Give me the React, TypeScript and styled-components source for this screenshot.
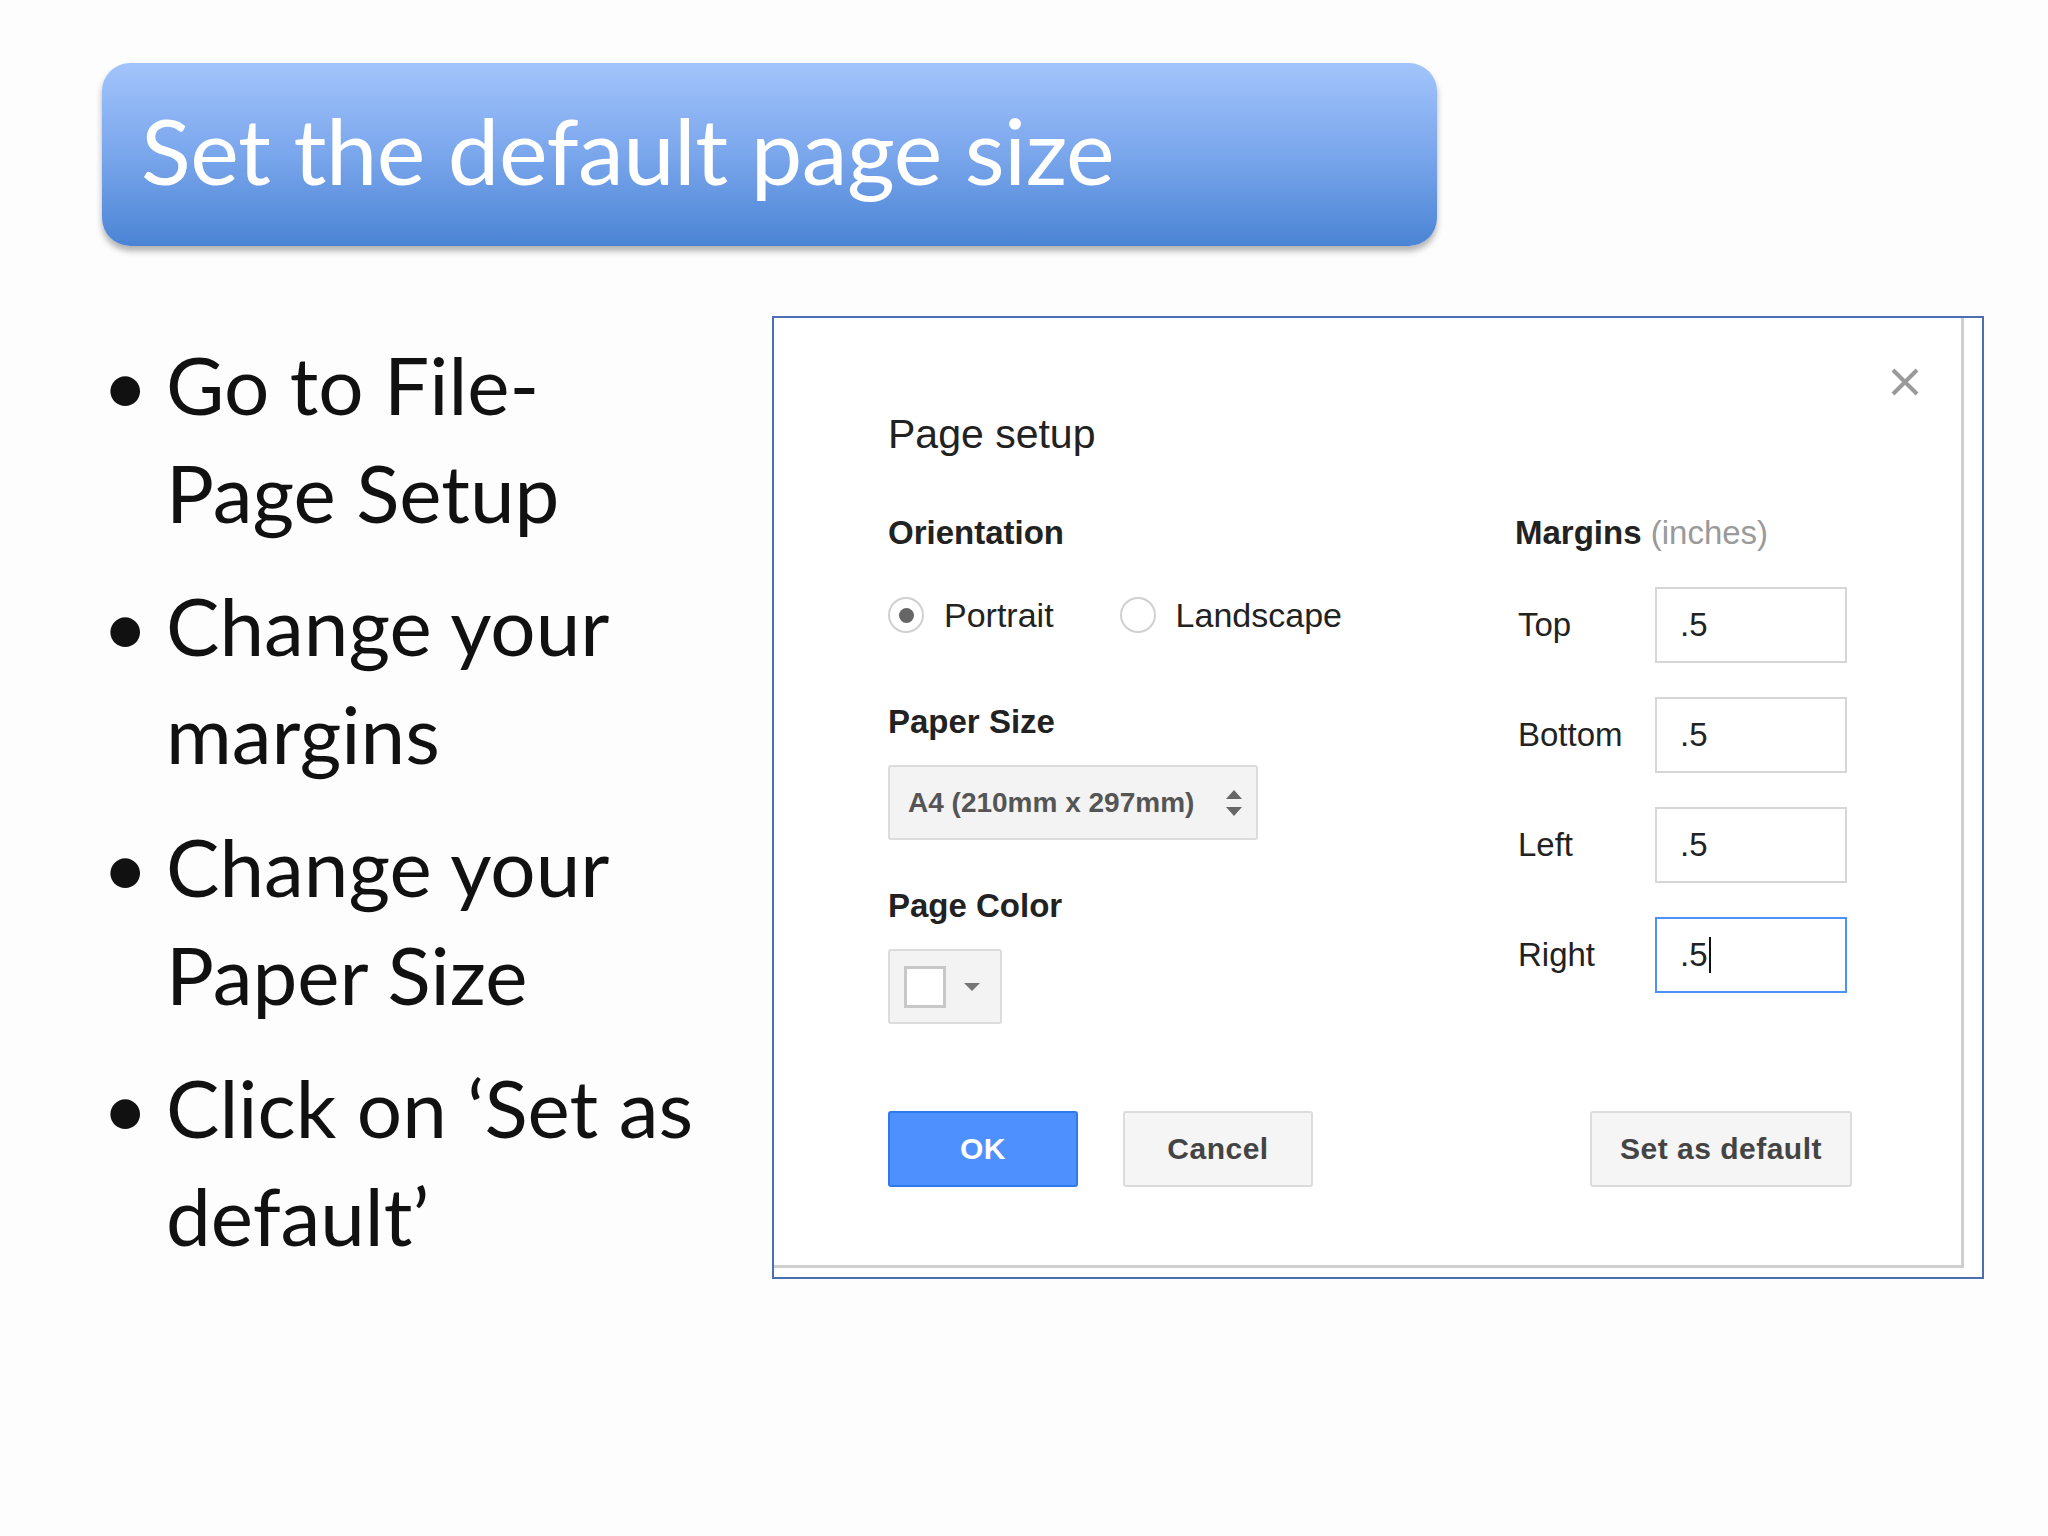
import styled, { createGlobalStyle } from 'styled-components';

const GlobalStyle = createGlobalStyle`
  body {
    margin: 0;
    background: #fdfdfd;
  }
`;

const Page = styled.div`
  width: 2048px;
  height: 1536px;
  padding: 63px 0 0 102px;
  box-sizing: border-box;
  font-family: Lato, 'Open Sans', sans-serif;
`;

const TitleBar = styled.div`
  width: 1335px;
  height: 183px;
  box-sizing: border-box;
  border-radius: 28px;
  background: linear-gradient(180deg, #a2c4fb 0%, #7aa6ec 50%, #4a84d4 100%);
  box-shadow: 0 5px 6px rgba(0, 0, 0, 0.3);
  display: flex;
  align-items: center;
  padding: 0 0 10px 39px;
  color: #fff;
  font-size: 92px;
  letter-spacing: -0.5px;
`;

const Content = styled.div`
  display: flex;
  align-items: flex-start;
  margin-top: 70px;
`;

const BulletList = styled.ul`
  list-style: none;
  margin: 0;
  padding: 14px 0 0;
  width: 670px;
  display: flex;
  flex-direction: column;
  gap: 25px;
`;

const Bullet = styled.li`
  position: relative;
  padding-left: 64px;
  font-size: 80px;
  line-height: 108px;
  color: #111;
  &::before {
    content: '•';
    position: absolute;
    left: 0;
    top: 0;
  }
`;

const Frame = styled.div`
  width: 1212px;
  height: 963px;
  box-sizing: border-box;
  border: 2px solid #4b6fb0;
  padding: 0 18px 9px 0;
  background: #fff;
  display: flex;
`;

const Dialog = styled.div`
  flex: 1;
  position: relative;
  border-right: 3px solid #cfcfcf;
  border-bottom: 3px solid #cfcfcf;
  padding: 91px 114px 0 114px;
  font-family: 'Liberation Sans', Arial, sans-serif;
  color: #222;
`;

const Close = styled.div`
  position: absolute;
  top: 48px;
  right: 40px;
  color: #9a9a9a;
`;

const DialogTitle = styled.div`
  font-size: 41px;
  line-height: 50px;
`;

const Columns = styled.div`
  display: flex;
  margin-top: 54px;
`;

const LeftCol = styled.div`
  width: 627px;
  display: flex;
  flex-direction: column;
`;

const RightCol = styled.div`
  flex: 1;
  display: flex;
  flex-direction: column;
`;

const Label = styled.div<{ $gap?: number }>`
  font-size: 33px;
  font-weight: bold;
  line-height: 40px;
  margin-top: ${(p) => p.$gap ?? 0}px;
  span {
    font-weight: normal;
    color: #9a9a9a;
  }
`;

const RadioRow = styled.div`
  display: flex;
  align-items: center;
  height: 40px;
  margin-top: 42px;
  font-size: 34px;
`;

const RadioItem = styled.label`
  display: flex;
  align-items: center;
  gap: 20px;
  margin-right: 66px;
`;

const Radio = styled.span<{ $checked?: boolean }>`
  width: 36px;
  height: 36px;
  box-sizing: border-box;
  border-radius: 50%;
  border: 2px solid #d0d0d0;
  background: #fff;
  display: flex;
  align-items: center;
  justify-content: center;
  &::after {
    content: '';
    width: 15px;
    height: 15px;
    border-radius: 50%;
    background: ${(p) => (p.$checked ? '#666' : 'transparent')};
  }
`;

const Select = styled.div`
  margin-top: 23px;
  width: 370px;
  height: 75px;
  box-sizing: border-box;
  border: 2px solid #dcdcdc;
  border-radius: 3px;
  background: #f3f3f3;
  display: flex;
  align-items: center;
  justify-content: space-between;
  padding: 0 12px 0 18px;
  font-size: 28px;
  font-weight: bold;
  color: #555;
`;

const ColorButton = styled.div`
  margin-top: 23px;
  width: 114px;
  height: 75px;
  box-sizing: border-box;
  border: 2px solid #dcdcdc;
  border-radius: 3px;
  background: #f3f3f3;
  display: flex;
  align-items: center;
  padding-left: 14px;
  gap: 18px;
`;

const Swatch = styled.div`
  width: 42px;
  height: 42px;
  box-sizing: border-box;
  border: 3px solid #c8c8c8;
  background: #fff;
`;

const Caret = styled.div`
  width: 0;
  height: 0;
  border-left: 8px solid transparent;
  border-right: 8px solid transparent;
  border-top: 8px solid #777;
`;

const MarginRow = styled.div`
  display: flex;
  align-items: center;
  margin-top: 34px;
  &:first-of-type {
    margin-top: 19px;
  }
`;

const MarginLabel = styled.div`
  width: 137px;
  padding-left: 3px;
  font-size: 33px;
  color: #222;
`;

const Input = styled.div<{ $focused?: boolean }>`
  width: 192px;
  height: 76px;
  box-sizing: border-box;
  border: 2px solid ${(p) => (p.$focused ? '#4d90fe' : '#d6d6d6')};
  background: #fff;
  display: flex;
  align-items: center;
  padding-left: 23px;
  font-size: 33px;
  color: #222;
`;

const Cursor = styled.span`
  display: inline-block;
  width: 2px;
  height: 36px;
  background: #111;
  margin-left: 1px;
`;

const Footer = styled.div`
  display: flex;
  align-items: center;
  margin-top: 87px;
  gap: 45px;
`;

const Button = styled.div<{ $primary?: boolean; $push?: boolean }>`
  height: 76px;
  min-width: 190px;
  box-sizing: border-box;
  padding: 0 28px;
  border: 2px solid ${(p) => (p.$primary ? '#3079ed' : '#dcdcdc')};
  border-radius: 3px;
  background: ${(p) => (p.$primary ? '#4d90fe' : '#f5f5f5')};
  color: ${(p) => (p.$primary ? '#fff' : '#444')};
  font-size: 30px;
  font-weight: bold;
  letter-spacing: 0.5px;
  display: flex;
  align-items: center;
  justify-content: center;
  margin-left: ${(p) => (p.$push ? 'auto' : '0')};
  margin-right: ${(p) => (p.$push ? '-5px' : '0')};
`;

const margins = [
  { label: 'Top', value: '.5' },
  { label: 'Bottom', value: '.5' },
  { label: 'Left', value: '.5' },
  { label: 'Right', value: '.5', focused: true },
];

const App = () => (
  <>
    <GlobalStyle />
    <Page>
      <TitleBar>Set the default page size</TitleBar>
      <Content>
        <BulletList>
          <Bullet>Go to File-<br />Page Setup</Bullet>
          <Bullet>Change your<br />margins</Bullet>
          <Bullet>Change your<br />Paper Size</Bullet>
          <Bullet>Click on ‘Set as<br />default’</Bullet>
        </BulletList>
        <Frame>
          <Dialog>
            <Close>
              <svg width="32" height="32" viewBox="0 0 32 32">
                <path d="M4 4L28 28M28 4L4 28" stroke="currentColor" strokeWidth="4" />
              </svg>
            </Close>
            <DialogTitle>Page setup</DialogTitle>
            <Columns>
              <LeftCol>
                <Label>Orientation</Label>
                <RadioRow>
                  <RadioItem>
                    <Radio $checked />
                    Portrait
                  </RadioItem>
                  <RadioItem>
                    <Radio />
                    Landscape
                  </RadioItem>
                </RadioRow>
                <Label $gap={67}>Paper Size</Label>
                <Select>
                  A4 (210mm x 297mm)
                  <svg width="20" height="30" viewBox="0 0 20 30">
                    <path d="M10 2L18 11H2Z M10 28L18 19H2Z" fill="#666" />
                  </svg>
                </Select>
                <Label $gap={46}>Page Color</Label>
                <ColorButton>
                  <Swatch />
                  <Caret />
                </ColorButton>
              </LeftCol>
              <RightCol>
                <Label>
                  Margins <span>(inches)</span>
                </Label>
                {margins.map((m) => (
                  <MarginRow key={m.label}>
                    <MarginLabel>{m.label}</MarginLabel>
                    <Input $focused={m.focused}>
                      {m.value}
                      {m.focused && <Cursor />}
                    </Input>
                  </MarginRow>
                ))}
              </RightCol>
            </Columns>
            <Footer>
              <Button $primary>OK</Button>
              <Button>Cancel</Button>
              <Button $push>Set as default</Button>
            </Footer>
          </Dialog>
        </Frame>
      </Content>
    </Page>
  </>
);

export default App;
